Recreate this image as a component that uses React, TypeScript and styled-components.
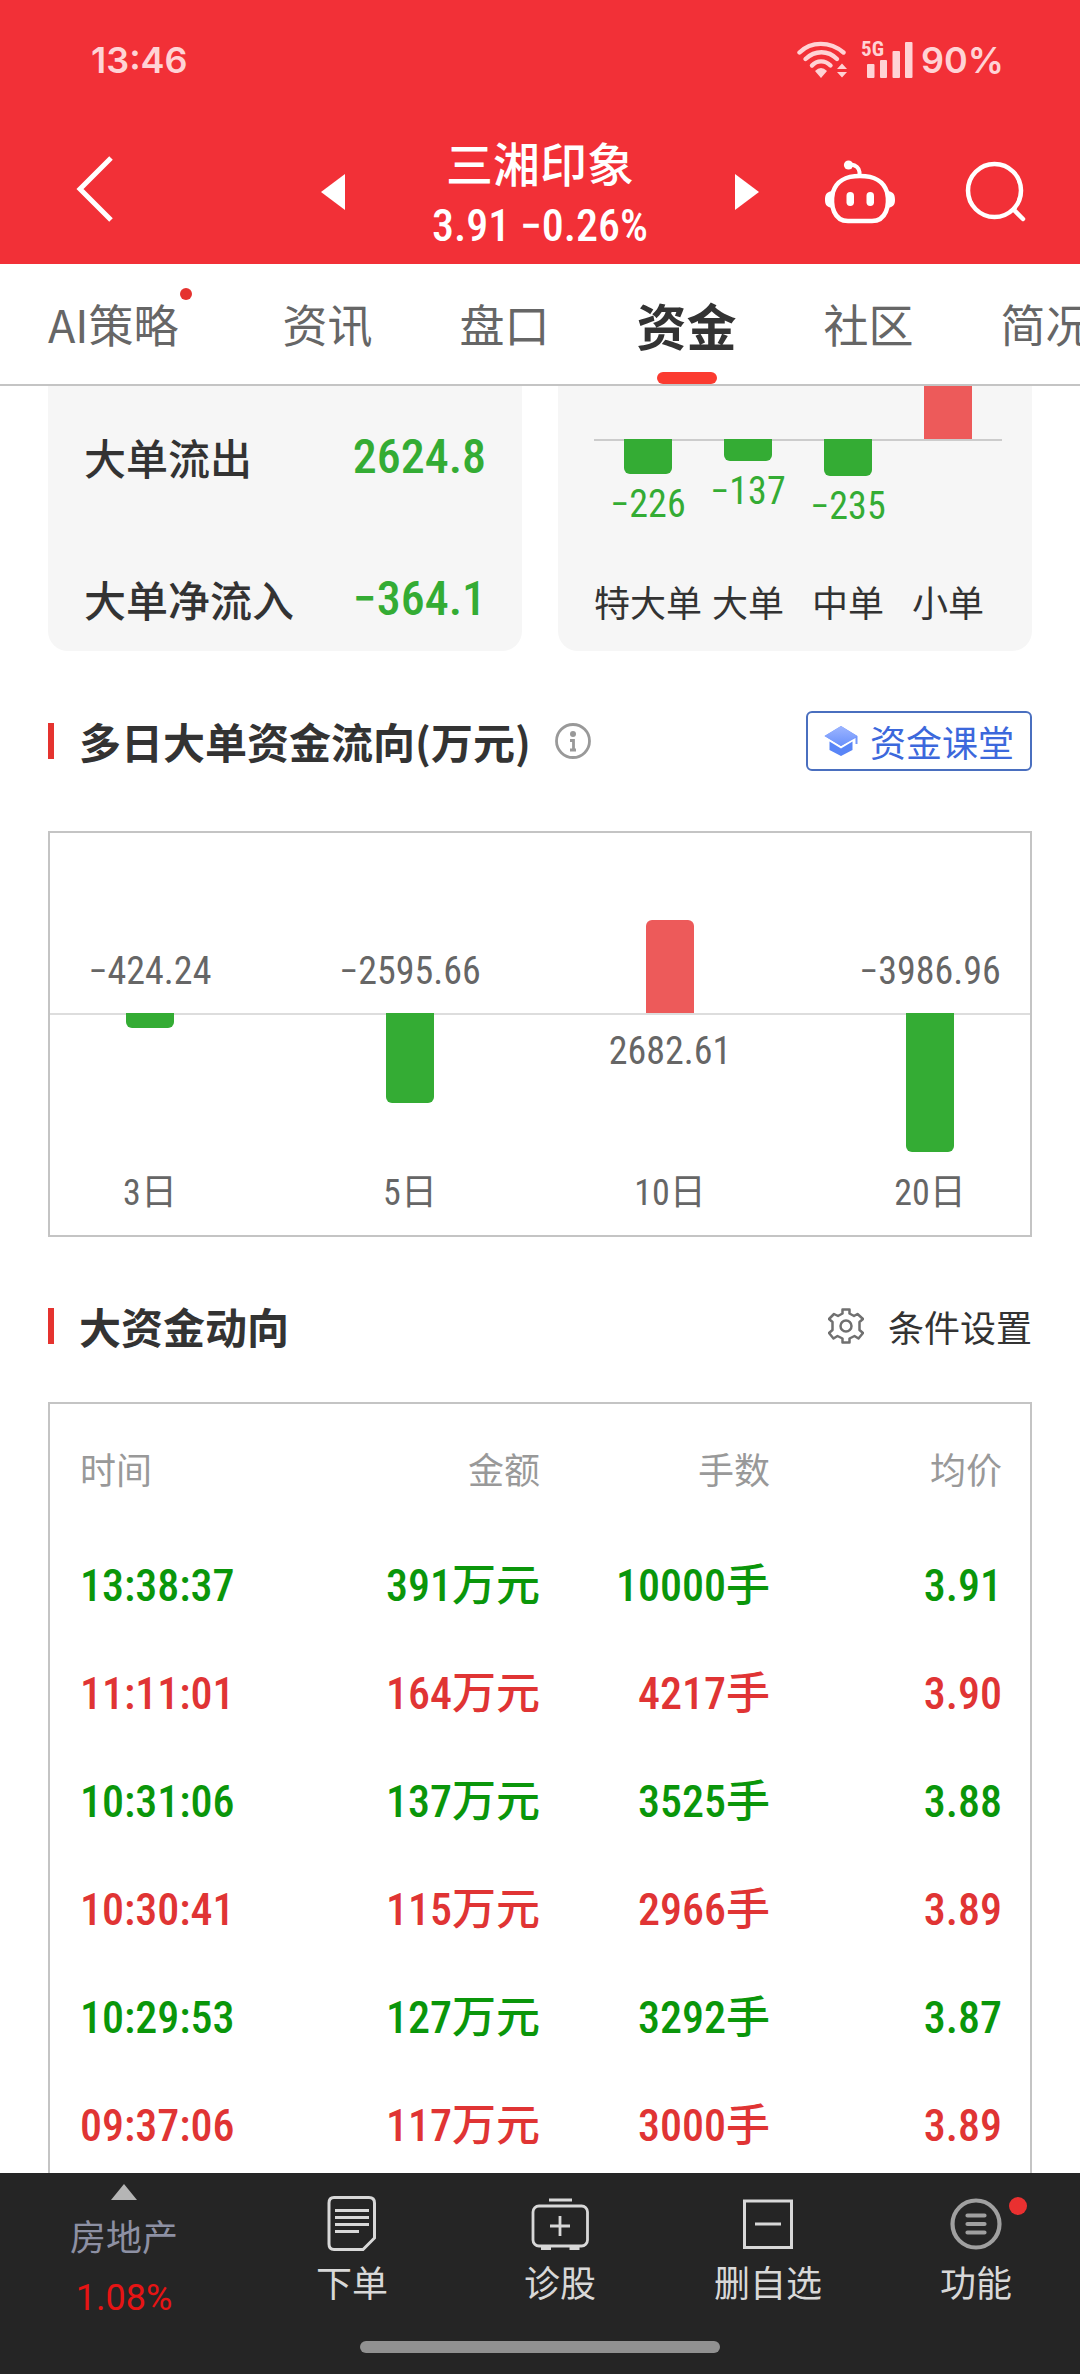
import React from "react";
import styled, { createGlobalStyle, css } from "styled-components";

const cjk = '"Noto Sans CJK SC", sans-serif';
const numeric = `"Roboto Condensed", Roboto, ${cjk}`;

const color = {
  brand: "#f23037",
  accent: "#e5332f",
  up: "#ed5a5a",
  down: "#34ac34",
  rise: "#e03434",
  fall: "#0a960a",
  ink: "#333333",
  text: "#666666",
  muted: "#999999",
  line: "#c4c4c4",
  panel: "#f6f6f6",
  dock: "#252525",
  dockText: "#d8d8d8",
};

const GlobalStyle = createGlobalStyle`
  *, *::before, *::after { box-sizing: border-box; }
  body { margin: 0; background: #fff; color: ${color.ink}; font-family: ${cjk}; }
  button { margin: 0; padding: 0; border: 0; background: none; color: inherit; font: inherit; cursor: pointer; }
  a { color: inherit; text-decoration: none; }
  h1, h2, p { margin: 0; }
  svg { display: block; flex: none; }
`;

const Screen = styled.div`
  display: flex;
  flex-direction: column;
  height: 100vh;
  overflow: hidden;
`;

const Header = styled.header`
  flex: none;
  background: ${color.brand};
  color: #fff;
`;

const StatusBar = styled.div`
  display: flex;
  justify-content: space-between;
  align-items: center;
  height: 120px;
  padding: 0 76px 0 91px;
  color: #ffd3d5;
  font: 600 36px/40px Inter, ${cjk};
`;

const StatusIcons = styled.div`
  display: flex;
  align-items: center;
`;

const Signal = styled.div`
  position: relative;
  margin: 0 8px 0 14px;
`;

const NetworkType = styled.span`
  position: absolute;
  top: -4px;
  left: 0;
  font: 700 21px/24px ${numeric};
`;

const TitleBar = styled.div`
  display: grid;
  grid-template-columns: 1fr auto 1fr;
  align-items: center;
  height: 144px;
  padding: 0 54px;
`;

const StockPicker = styled.div`
  display: grid;
  grid-template-columns: 24px 390px 24px;
  align-items: center;
`;

const StockTitle = styled.div`
  display: flex;
  flex-direction: column;
  align-items: center;
  padding-top: 8px;
`;

const StockName = styled.h1`
  font: 500 47px/60px ${cjk};
`;

const StockQuote = styled.p`
  font: 500 44px/68px ${numeric};
`;

const IconButton = styled.button`
  display: flex;
  align-items: center;
`;

const BackButton = styled(IconButton)`
  padding: 0 0 6px 21px;
`;

const TitleActions = styled.div`
  display: flex;
  justify-content: flex-end;
  align-items: center;
  gap: 68px;
`;

const Tabs = styled.nav`
  display: flex;
  flex: none;
  gap: 87px;
  height: 122px;
  padding-left: 48px;
  border-bottom: 2px solid ${color.line};
  overflow: hidden;
`;

const Tab = styled.a<{ $active?: boolean }>`
  position: relative;
  flex: none;
  color: ${color.text};
  font-size: 45px;
  line-height: 120px;
  white-space: nowrap;
  ${(p) =>
    p.$active &&
    css`
      color: ${color.ink};
      font-size: 50px;
      font-weight: 700;
      &::after {
        content: "";
        position: absolute;
        bottom: 0;
        left: calc(50% - 30px);
        width: 60px;
        height: 12px;
        border-radius: 6px;
        background: #fb3b30;
      }
    `}
`;

const TabLabel = styled.span<{ $dot?: boolean }>`
  ${(p) =>
    p.$dot &&
    css`
      padding-right: 17px;
      &::after {
        content: "";
        position: absolute;
        top: 24px;
        right: 4px;
        width: 12px;
        height: 12px;
        border-radius: 50%;
        background: ${color.accent};
      }
    `}
`;

const Content = styled.main`
  flex: 1;
  min-height: 0;
  padding: 0 48px;
  overflow: hidden;
`;

const Summary = styled.section`
  display: grid;
  grid-template-columns: 1fr 1fr;
  gap: 36px;
`;

const Card = styled.div<{ $chart?: boolean }>`
  height: 265px;
  padding: 0 ${(p) => (p.$chart ? 30 : 36)}px 0 36px;
  border-radius: 0 0 20px 20px;
  background: ${color.panel};
`;

const Stat = styled.div`
  display: flex;
  justify-content: space-between;
  align-items: center;
  height: 142px;
  font: 500 42px/60px ${cjk};
`;

const StatValue = styled.span`
  color: ${color.down};
  font: 500 48px/60px ${numeric};
`;

const OrderChart = styled.div`
  display: grid;
  grid-template-columns: repeat(4, minmax(0, 1fr));
  padding: 0 4px;
  background: linear-gradient(#ccc, #ccc) 0 53px / 100% 2px no-repeat;
`;

const OrderColumn = styled.div`
  display: flex;
  flex-direction: column;
  align-items: center;
  white-space: nowrap;
`;

const BarSlot = styled.div<{ $height: number; $alignEnd?: boolean }>`
  display: flex;
  flex-direction: column;
  justify-content: ${(p) => (p.$alignEnd ? "flex-end" : "flex-start")};
  align-items: center;
  height: ${(p) => p.$height}px;
`;

const Bar = styled.div<{ $up?: boolean; $square?: boolean }>`
  flex: none;
  width: 48px;
  border-radius: ${(p) => (p.$square ? "0" : p.$up ? "6px 6px 0 0" : "0 0 6px 6px")};
  background: ${(p) => (p.$up ? color.up : color.down)};
`;

const OrderValue = styled.span`
  padding-top: 8px;
  color: ${color.down};
  font: 400 38px/44px ${numeric};
`;

const OrderName = styled.span`
  font-size: 36px;
  line-height: 52px;
`;

const SectionHead = styled.div<{ $compact?: boolean }>`
  display: flex;
  align-items: center;
  height: ${(p) => (p.$compact ? 165 : 180)}px;
  padding-top: ${(p) => (p.$compact ? 12 : 0)}px;
  color: ${color.ink};
`;

const SectionTitle = styled.h2`
  display: flex;
  align-items: center;
  gap: 25px;
  font: 700 42px/60px ${cjk};
  &::before {
    content: "";
    width: 6px;
    height: 36px;
    background: ${color.accent};
  }
`;

const InfoButton = styled(IconButton)`
  margin-left: 24px;
`;

const LessonButton = styled.button`
  display: flex;
  align-items: center;
  gap: 12px;
  height: 60px;
  margin-left: auto;
  padding: 0 16px;
  border: 2px solid #4a6fbf;
  border-radius: 6px;
  color: #3c68dc;
  font-size: 36px;
  line-height: 56px;
`;

const SettingsButton = styled.button`
  display: flex;
  align-items: center;
  gap: 24px;
  margin-left: auto;
  font-size: 36px;
  line-height: 56px;
`;

const FlowChart = styled.section`
  display: grid;
  grid-template-columns: repeat(4, minmax(0, 1fr));
  gap: 60px;
  height: 406px;
  border: 2px solid ${color.line};
  background: linear-gradient(#ddd, #ddd) 0 180px / 100% 2px no-repeat;
`;

const FlowColumn = styled.div`
  display: flex;
  flex-direction: column;
  align-items: center;
  color: ${color.text};
  white-space: nowrap;
`;

const FlowValue = styled.span<{ $above?: boolean }>`
  padding: ${(p) => (p.$above ? "0 0 22px" : "18px 0 0")};
  font: 400 38px/40px ${numeric};
`;

const FlowDays = styled.span`
  font: 400 36px/48px ${numeric};
`;

const TradeBox = styled.section`
  height: 100%;
  border: 2px solid ${color.line};
  border-bottom: 0;
`;

const TradeTable = styled.table`
  width: 100%;
  border-collapse: collapse;
  table-layout: fixed;
`;

const Column = styled.col<{ $width?: string }>`
  width: ${(p) => p.$width ?? "auto"};
`;

const HeadCell = styled.th<{ $first?: boolean; $last?: boolean }>`
  height: 128px;
  padding: 0 ${(p) => (p.$last ? 28 : 0)}px 0 ${(p) => (p.$first ? 30 : 0)}px;
  color: ${color.muted};
  font-size: 36px;
  font-weight: 400;
  line-height: 52px;
  text-align: ${(p) => (p.$first ? "left" : "right")};
`;

const TradeRow = styled.tr<{ $up: boolean }>`
  height: 108px;
  color: ${(p) => (p.$up ? color.rise : color.fall)};
`;

const Cell = styled.td<{ $first?: boolean; $last?: boolean }>`
  padding: 0 ${(p) => (p.$last ? 28 : 0)}px 0 ${(p) => (p.$first ? 30 : 0)}px;
  font: 500 44px/60px ${numeric};
  text-align: ${(p) => (p.$first ? "left" : "right")};
  white-space: nowrap;
`;

const Dock = styled.footer`
  flex: none;
  background: ${color.dock};
  color: ${color.dockText};
`;

const DockItems = styled.nav`
  display: grid;
  grid-template-columns: 248px repeat(4, 1fr);
  height: 168px;
`;

const DockItem = styled.a`
  display: flex;
  flex-direction: column;
  align-items: center;
  padding-top: 20px;
  font-size: 36px;
  line-height: 56px;
`;

const DockIcon = styled.span<{ $dot?: boolean }>`
  position: relative;
  ${(p) =>
    p.$dot &&
    css`
      &::after {
        content: "";
        position: absolute;
        top: 4px;
        right: -22px;
        width: 18px;
        height: 18px;
        border-radius: 50%;
        background: #ea3030;
      }
    `}
`;

const Sector = styled.a`
  display: flex;
  flex-direction: column;
  align-items: center;
  padding-top: 11px;
  color: #8d90a3;
  font-size: 36px;
  line-height: 60px;
`;

const SectorName = styled.span`
  padding-top: 5px;
`;

const SectorChange = styled.span`
  color: #e61414;
  font: 400 36px/66px Roboto, ${cjk};
`;

const HomeIndicator = styled.div`
  display: flex;
  justify-content: center;
  height: 33px;
  &::before {
    content: "";
    width: 360px;
    height: 12px;
    border-radius: 6px;
    background: #919191;
  }
`;

const WifiIcon = () => (
  <svg width="50" height="38" viewBox="0 0 50 38" fill="none" stroke="currentColor" strokeWidth="4.4" strokeLinecap="round" aria-hidden="true">
    <path d="M2.500 11.500C14 0 33 0 46.500 11.500" />
    <path d="M8.500 18C18 9 31 9 40 18" />
    <path d="M15 24.500C20 19 28 19 33.500 24.500" />
    <path d="M18 30Q24 24 30 30L24 37Z" fill="currentColor" stroke="none" />
    <path d="M40 28L45 22.500L50 28ZM40 31L50 31L45 36.500Z" fill="currentColor" stroke="none" />
  </svg>
);

const SignalIcon = () => (
  <svg width="52" height="38" viewBox="0 0 52 38" fill="currentColor" aria-hidden="true">
    <rect x="6" y="23" width="7.500" height="14" rx="1" />
    <rect x="19" y="19" width="7" height="18" rx="1" />
    <rect x="31.500" y="10" width="7.500" height="27" rx="1" />
    <rect x="44" y="1" width="7.500" height="36" rx="1" />
  </svg>
);

const BackIcon = () => (
  <svg width="38" height="68" viewBox="0 0 38 68" fill="none" stroke="currentColor" strokeWidth="5" aria-hidden="true">
    <path d="M36 3L5 34L36 65" />
  </svg>
);

const Triangle = ({ flip }: { flip?: boolean }) => (
  <svg width="24" height="38" viewBox="0 0 24 38" fill="currentColor" aria-hidden="true">
    <path d={flip ? "M0 1L24 19L0 37Z" : "M24 1L0 19L24 37Z"} />
  </svg>
);

const RobotIcon = () => (
  <svg width="72" height="66" viewBox="0 0 72 66" fill="none" stroke="currentColor" aria-hidden="true">
    <path d="M36 17C50 17 59 21 63 33C66 47 62 62 48 62H24C10 62 6 47 9 33C13 21 22 17 36 17Z" strokeWidth="4.500" />
    <path d="M35.500 17V13Q34.500 6.500 27 5.500" strokeWidth="4" />
    <circle cx="24.500" cy="6" r="4.600" fill="currentColor" stroke="none" />
    <path d="M8 32C2 33 1 36 1 41S3 48 8 49ZM64 32C70 33 71 36 71 41S69 48 64 49Z" fill="currentColor" stroke="none" />
    <rect x="22.500" y="33" width="7.500" height="14" rx="3.700" fill="currentColor" stroke="none" />
    <rect x="42.500" y="33" width="7.500" height="14" rx="3.700" fill="currentColor" stroke="none" />
  </svg>
);

const SearchIcon = () => (
  <svg width="62" height="62" viewBox="0 0 62 62" fill="none" stroke="currentColor" strokeWidth="4.500" strokeLinecap="round" aria-hidden="true">
    <circle cx="30.500" cy="29.500" r="26.500" />
    <path d="M49.500 48.500L59 58" />
  </svg>
);

const InfoIcon = () => (
  <svg width="36" height="36" viewBox="0 0 36 36" fill="none" stroke={color.muted} aria-hidden="true">
    <circle cx="18" cy="18" r="16.500" strokeWidth="2.800" />
    <circle cx="18" cy="11" r="3" fill={color.muted} stroke="none" />
    <path d="M15 17.500H18.500V27M15 27H21" strokeWidth="2.800" />
  </svg>
);

const HatIcon = () => (
  <svg width="34" height="32" viewBox="0 0 34 32" aria-hidden="true">
    <defs>
      <linearGradient id="hat" x1="0" y1="0" x2="0" y2="1">
        <stop offset="0" stopColor="#9db5ff" />
        <stop offset="1" stopColor="#6a91fb" />
      </linearGradient>
    </defs>
    <path d="M17 1L33.500 11V19H31.500V13L17 21L0.500 11Z" fill="#7397fb" />
    <path d="M17 1L33 11L17 21L0.500 11Z" fill="url(#hat)" />
    <path d="M5.500 16.500L17 23.500L28.500 16.500V25L17 31L5.500 25Z" fill="#5985f7" />
  </svg>
);

const GearIcon = () => (
  <svg width="36" height="36" viewBox="0 0 36 36" fill="none" stroke="#707070" strokeWidth="2.500" strokeLinejoin="round" aria-hidden="true">
    <path d="M14.500 1.500H21.500V5.500L26 8L29.500 6L35 11L31.500 14V22L35 25L30.500 30.500L26.500 28L21.500 30.500V34.500H14.500V30.500L9.500 28L5.500 30.500L1 25L4.500 22V14L1 11L6 6L10 8L14.500 5.500Z" />
    <circle cx="18" cy="18" r="5.500" />
  </svg>
);

const OrderIcon = () => (
  <svg width="58" height="60" viewBox="0 0 58 60" fill="none" stroke="currentColor" strokeWidth="3" aria-hidden="true">
    <path d="M11 4.500H46Q51.500 4.500 51.500 10V45L40 56.500H11Q6 56.500 6 51V10Q6 4.500 11 4.500Z" />
    <path d="M12 17.500H46M12 24.500H46M12 31.500H46M12 38.500H36" />
  </svg>
);

const DiagnoseIcon = () => (
  <svg width="58" height="60" viewBox="0 0 58 60" fill="none" stroke="currentColor" strokeWidth="2.800" aria-hidden="true">
    <rect x="2" y="13" width="54.500" height="40" rx="6" />
    <path d="M18 7H41M29 23V43M19 33H39" />
    <path d="M10 55H20M38.500 55H48.500" strokeWidth="4" />
  </svg>
);

const RemoveIcon = () => (
  <svg width="58" height="60" viewBox="0 0 58 60" fill="none" stroke="currentColor" strokeWidth="3" aria-hidden="true">
    <path d="M5.500 8H52.500V54.500H5.500ZM16 31H42" />
  </svg>
);

const MenuIcon = () => (
  <svg width="58" height="60" viewBox="0 0 58 60" fill="none" stroke="#a0a0a0" strokeWidth="4.200" strokeLinecap="round" aria-hidden="true">
    <circle cx="29" cy="31" r="23.500" />
    <path d="M20.500 22.500H37.500M20.500 31H37.500M20.500 39.500H37.500" />
  </svg>
);

const tabs = ["AI策略", "资讯", "盘口", "资金", "社区", "简况"];

const stats = [
  { label: "大单流出", value: "2624.8" },
  { label: "大单净流入", value: "−364.1" },
];

const orders = [
  { name: "特大单", value: -226, size: 35 },
  { name: "大单", value: -137, size: 22 },
  { name: "中单", value: -235, size: 37 },
  { name: "小单", value: null, size: 53 },
];

const flows = [
  { days: "3日", value: -424.24 },
  { days: "5日", value: -2595.66 },
  { days: "10日", value: 2682.61 },
  { days: "20日", value: -3986.96 },
];

const trades = [
  { time: "13:38:37", amount: "391万元", lots: "10000手", price: "3.91", up: false },
  { time: "11:11:01", amount: "164万元", lots: "4217手", price: "3.90", up: true },
  { time: "10:31:06", amount: "137万元", lots: "3525手", price: "3.88", up: false },
  { time: "10:30:41", amount: "115万元", lots: "2966手", price: "3.89", up: true },
  { time: "10:29:53", amount: "127万元", lots: "3292手", price: "3.87", up: false },
  { time: "09:37:06", amount: "117万元", lots: "3000手", price: "3.89", up: true },
];

const dockItems = [
  { label: "下单", Icon: OrderIcon },
  { label: "诊股", Icon: DiagnoseIcon },
  { label: "删自选", Icon: RemoveIcon },
  { label: "功能", Icon: MenuIcon, dot: true },
];

const signed = (n: number) => String(n).replace("-", "−");
const flowHeight = (n: number) => Math.round((Math.abs(n) / 4000) * 139);

export default function App() {
  return (
    <>
      <GlobalStyle />
      <Screen>
        <Header>
          <StatusBar>
            <span>13:46</span>
            <StatusIcons>
              <WifiIcon />
              <Signal>
                <NetworkType>5G</NetworkType>
                <SignalIcon />
              </Signal>
              <span>90%</span>
            </StatusIcons>
          </StatusBar>
          <TitleBar>
            <BackButton aria-label="返回">
              <BackIcon />
            </BackButton>
            <StockPicker>
              <IconButton aria-label="上一只">
                <Triangle />
              </IconButton>
              <StockTitle>
                <StockName>三湘印象</StockName>
                <StockQuote>3.91 −0.26%</StockQuote>
              </StockTitle>
              <IconButton aria-label="下一只">
                <Triangle flip />
              </IconButton>
            </StockPicker>
            <TitleActions>
              <IconButton aria-label="智能助手">
                <RobotIcon />
              </IconButton>
              <IconButton aria-label="搜索">
                <SearchIcon />
              </IconButton>
            </TitleActions>
          </TitleBar>
        </Header>

        <Tabs>
          {tabs.map((name, i) => (
            <Tab key={name} href="#" $active={name === "资金"}>
              <TabLabel $dot={i === 0}>{name}</TabLabel>
            </Tab>
          ))}
        </Tabs>

        <Content>
          <Summary>
            <Card>
              {stats.map((s) => (
                <Stat key={s.label}>
                  <span>{s.label}</span>
                  <StatValue>{s.value}</StatValue>
                </Stat>
              ))}
            </Card>
            <Card $chart>
              <OrderChart>
                {orders.map((o) => (
                  <OrderColumn key={o.name}>
                    <BarSlot $height={53} $alignEnd>
                      {o.value === null && <Bar $up $square style={{ height: o.size }} />}
                    </BarSlot>
                    <BarSlot $height={136}>
                      {o.value !== null && (
                        <>
                          <Bar style={{ height: o.size }} />
                          <OrderValue>{signed(o.value)}</OrderValue>
                        </>
                      )}
                    </BarSlot>
                    <OrderName>{o.name}</OrderName>
                  </OrderColumn>
                ))}
              </OrderChart>
            </Card>
          </Summary>

          <SectionHead>
            <SectionTitle>多日大单资金流向(万元)</SectionTitle>
            <InfoButton aria-label="说明">
              <InfoIcon />
            </InfoButton>
            <LessonButton>
              <HatIcon />
              资金课堂
            </LessonButton>
          </SectionHead>
          <FlowChart>
            {flows.map((f) => (
              <FlowColumn key={f.days}>
                <BarSlot $height={180} $alignEnd>
                  {f.value > 0 ? (
                    <Bar $up style={{ height: flowHeight(f.value) }} />
                  ) : (
                    <FlowValue $above>{signed(f.value)}</FlowValue>
                  )}
                </BarSlot>
                <BarSlot $height={156}>
                  {f.value > 0 ? (
                    <FlowValue>{signed(f.value)}</FlowValue>
                  ) : (
                    <Bar style={{ height: flowHeight(f.value) }} />
                  )}
                </BarSlot>
                <FlowDays>{f.days}</FlowDays>
              </FlowColumn>
            ))}
          </FlowChart>

          <SectionHead $compact>
            <SectionTitle>大资金动向</SectionTitle>
            <SettingsButton>
              <GearIcon />
              条件设置
            </SettingsButton>
          </SectionHead>
          <TradeBox>
            <TradeTable>
              <colgroup>
                <Column $width="24%" />
                <Column />
                <Column $width="230px" />
                <Column $width="260px" />
              </colgroup>
              <thead>
                <tr>
                  <HeadCell $first>时间</HeadCell>
                  <HeadCell>金额</HeadCell>
                  <HeadCell>手数</HeadCell>
                  <HeadCell $last>均价</HeadCell>
                </tr>
              </thead>
              <tbody>
                {trades.map((t) => (
                  <TradeRow key={t.time} $up={t.up}>
                    <Cell $first>{t.time}</Cell>
                    <Cell>{t.amount}</Cell>
                    <Cell>{t.lots}</Cell>
                    <Cell $last>{t.price}</Cell>
                  </TradeRow>
                ))}
              </tbody>
            </TradeTable>
          </TradeBox>
        </Content>

        <Dock>
          <DockItems>
            <Sector href="#">
              <svg width="26" height="16" viewBox="0 0 26 16" fill="#b5b5b5" aria-hidden="true">
                <path d="M13 0L26 16H0Z" />
              </svg>
              <SectorName>房地产</SectorName>
              <SectorChange>1.08%</SectorChange>
            </Sector>
            {dockItems.map(({ label, Icon, dot }) => (
              <DockItem key={label} href="#">
                <DockIcon $dot={dot}>
                  <Icon />
                </DockIcon>
                {label}
              </DockItem>
            ))}
          </DockItems>
          <HomeIndicator />
        </Dock>
      </Screen>
    </>
  );
}
